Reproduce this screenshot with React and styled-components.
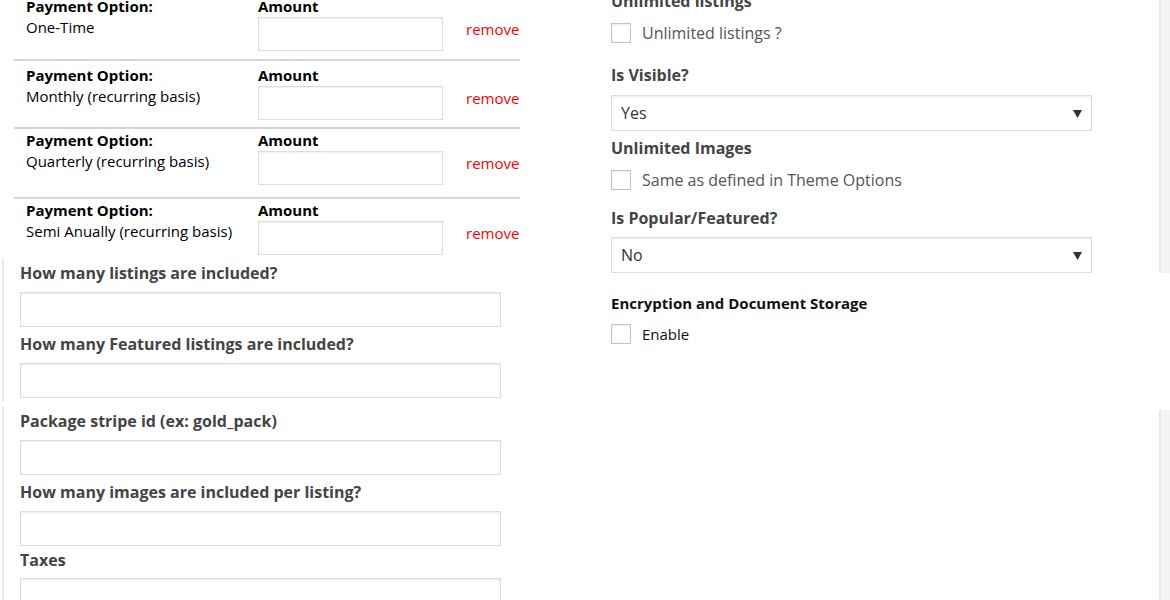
import React from 'react';
import styled, { createGlobalStyle } from 'styled-components';

const GlobalStyle = createGlobalStyle`
  body {
    margin: 0;
    background: #fff;
    font-family: "Open Sans", "Noto Sans", sans-serif;
    overflow: hidden;
  }
  * { box-sizing: border-box; }
`;

const Page = styled.div`
  display: grid;
  grid-template-columns: 611px 559px;
  align-items: start;
`;

const LeftCol = styled.div`
  margin-top: -4px;
`;

const PaymentRow = styled.div`
  margin-left: 14px;
  width: 506px;
  display: flex;
  align-items: flex-end;
  border-top: ${(p) => (p.$first ? 'none' : '2px solid #d6d6d6')};
  padding: ${(p) => p.$pt}px 0 ${(p) => p.$pb}px 12px;
  font-size: 15px;
  line-height: 21px;
  color: #000;
`;

const OptionCell = styled.div`
  align-self: flex-start;
  width: 232px;
`;

const AmountCell = styled.div`
  width: 185px;
`;

const Bold = styled.div`
  font-weight: 700;
`;

const AmountInput = styled.input`
  display: block;
  width: 185px;
  height: 34px;
  border: 1px solid #ddd;
  box-shadow: inset 0 1px 2px rgba(0, 0, 0, 0.07);
  background: #fff;
`;

const Remove = styled.a`
  margin-left: 23px;
  margin-bottom: 13px;
  line-height: 17px;
  color: #f00;
  font-size: 15px;
  cursor: pointer;
`;

const Panel = styled.div`
  margin: ${(p) => p.$mt || 0}px 0 0 2px;
  border-left: 2px solid #ebebeb;
  padding: 5px 0 3px 16px;
`;

const FieldLabel = styled.div`
  font-size: ${(p) => p.$size || 16}px;
  line-height: 20px;
  font-weight: 700;
  color: ${(p) => (p.$dark ? '#111' : '#444')};
  margin-bottom: ${(p) => p.$mb ?? 9}px;
`;

const TextInput = styled.input`
  display: block;
  width: 481px;
  height: 35px;
  margin-bottom: ${(p) => p.$mb ?? 7}px;
  border: 1px solid #ddd;
  box-shadow: inset 0 1px 2px rgba(0, 0, 0, 0.07);
  background: #fff;
  &:last-child { margin-bottom: 0; }
`;

const RightCol = styled.div`
  margin-top: -9px;
  display: flex;
  flex-direction: column;
`;

const Section = styled.div`
  padding: ${(p) => p.$pt || 0}px 0 ${(p) => p.$pb || 0}px 0;
  min-height: ${(p) => p.$minh || 0}px;
  border-right: 9px solid ${(p) => (p.$strip ? '#f4f4f4' : 'transparent')};
  box-shadow: ${(p) => (p.$strip ? 'inset -2px 0 0 #e7e7e7' : 'none')};
`;

const CheckRow = styled.label`
  display: flex;
  align-items: center;
  gap: 11px;
  height: 20px;
  margin-bottom: ${(p) => p.$mb || 0}px;
  font-size: ${(p) => p.$size || 16}px;
  color: ${(p) => p.$color || '#555'};
`;

const Box = styled.input.attrs({ type: 'checkbox' })`
  appearance: none;
  margin: 0;
  flex: none;
  width: 20px;
  height: 20px;
  border: 1px solid #c3c3c3;
  background: #fff;
  box-shadow: inset 0 1px 2px rgba(0, 0, 0, 0.08);
`;

const SelectWrap = styled.div`
  position: relative;
  width: 481px;
  height: 36px;
  margin-bottom: ${(p) => p.$mb || 0}px;
`;

const Select = styled.select`
  appearance: none;
  width: 100%;
  height: 100%;
  padding: 0 30px 0 9px;
  border: 1px solid #ddd;
  box-shadow: inset 0 1px 2px rgba(0, 0, 0, 0.07);
  background: #fff;
  font-family: inherit;
  font-size: 16px;
  color: #333;
`;

const Arrow = styled.svg`
  position: absolute;
  right: 10px;
  top: 14px;
  pointer-events: none;
`;

const payments = [
  { name: 'One-Time', first: true, pt: 0, pb: 8 },
  { name: 'Monthly (recurring basis)', pt: 4, pb: 7 },
  { name: 'Quarterly (recurring basis)', pt: 1, pb: 12 },
  { name: 'Semi Anually (recurring basis)', pt: 1, pb: 3 },
];

const Dropdown = ({ value, mb }) => (
  <SelectWrap $mb={mb}>
    <Select defaultValue={value}>
      <option>Yes</option>
      <option>No</option>
    </Select>
    <Arrow width="9" height="9" viewBox="0 0 9 9">
      <path d="M0 1h9L4.5 9z" fill="#333" />
    </Arrow>
  </SelectWrap>
);

export default function App() {
  return (
    <>
      <GlobalStyle />
      <Page>
        <LeftCol>
          {payments.map((p) => (
            <PaymentRow key={p.name} $first={p.first} $pt={p.pt} $pb={p.pb}>
              <OptionCell>
                <Bold>Payment Option:</Bold>
                <div>{p.name}</div>
              </OptionCell>
              <AmountCell>
                <Bold>Amount</Bold>
                <AmountInput type="text" />
              </AmountCell>
              <Remove>remove</Remove>
            </PaymentRow>
          ))}
          <Panel>
            <FieldLabel>How many listings are included?</FieldLabel>
            <TextInput type="text" />
            <FieldLabel>How many Featured listings are included?</FieldLabel>
            <TextInput type="text" />
          </Panel>
          <Panel $mt={5}>
            <FieldLabel>Package stripe id (ex: gold_pack)</FieldLabel>
            <TextInput type="text" />
            <FieldLabel>How many images are included per listing?</FieldLabel>
            <TextInput type="text" $mb={4} />
            <FieldLabel $mb={8}>Taxes</FieldLabel>
            <TextInput type="text" />
          </Panel>
        </LeftCol>

        <RightCol>
          <Section $strip>
            <FieldLabel $mb={12}>Unlimited listings</FieldLabel>
            <CheckRow $mb={22}>
              <Box />
              Unlimited listings ?
            </CheckRow>
            <FieldLabel $mb={10}>Is Visible?</FieldLabel>
            <Dropdown value="Yes" mb={7} />
            <FieldLabel $mb={12}>Unlimited Images</FieldLabel>
            <CheckRow $mb={18}>
              <Box />
              Same as defined in Theme Options
            </CheckRow>
            <FieldLabel $mb={9}>Is Popular/Featured?</FieldLabel>
            <Dropdown value="No" />
          </Section>
          <Section $pt={20} $pb={66}>
            <FieldLabel $dark $size={15} $mb={11}>
              Encryption and Document Storage
            </FieldLabel>
            <CheckRow $color="#111" $size={15}>
              <Box />
              Enable
            </CheckRow>
          </Section>
          <Section $strip $minh={300} />
        </RightCol>
      </Page>
    </>
  );
}
